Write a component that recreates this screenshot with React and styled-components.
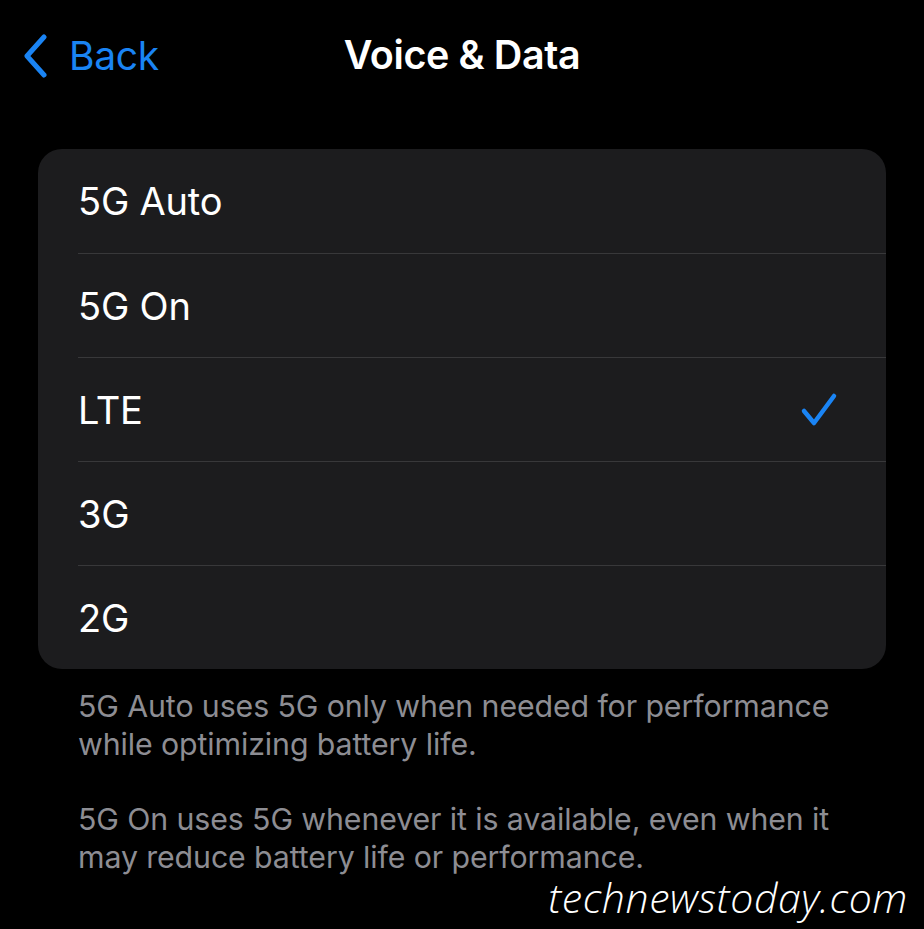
import React, { useState } from "react";
import styled, { createGlobalStyle } from "styled-components";

const GlobalStyle = createGlobalStyle`
    html, body {
        margin: 0;
        padding: 0;
        background: #000000;
    }
    body {
        font-family: Inter, "Noto Sans", "Liberation Sans", sans-serif;
        -webkit-font-smoothing: antialiased;
    }
`;

const options = ["5G Auto", "5G On", "LTE", "3G", "2G"];

function ChevronLeft() {
    return (
        <svg width="26" height="44" viewBox="0 0 26 44" fill="none">
            <path
                d="M22 3 L5 22 L22 41"
                stroke="#1a84f4"
                strokeWidth="5"
                strokeLinecap="round"
                strokeLinejoin="round"
            />
        </svg>
    );
}

function Check() {
    return (
        <svg width="38" height="36" viewBox="0 0 38 36" fill="none">
            <path
                d="M4 19 L14 31 L34 4"
                stroke="#1a84f4"
                strokeWidth="4.5"
                strokeLinecap="round"
                strokeLinejoin="round"
            />
        </svg>
    );
}

function App() {
    const [selected, setSelected] = useState("LTE");
    return (
        <Screen>
            <GlobalStyle />
            <NavBar>
                <BackButton>
                    <ChevronLeft />
                    <span>Back</span>
                </BackButton>
                <Title>Voice &amp; Data</Title>
            </NavBar>

            <Group>
                {options.map((item) => (
                    <Row key={item} onClick={() => setSelected(item)}>
                        <RowInner>
                            <Label>{item}</Label>
                            {selected === item && <Check />}
                        </RowInner>
                    </Row>
                ))}
            </Group>

            <Footer>
                <p>
                    5G Auto uses 5G only when needed for performance
                    <br />
                    while optimizing battery life.
                </p>
                <p>
                    5G On uses 5G whenever it is available, even when it
                    <br />
                    may reduce battery life or performance.
                </p>
            </Footer>

            <Watermark>technewstoday.com</Watermark>
        </Screen>
    );
}

const Screen = styled.div`
    position: relative;
    width: 924px;
    height: 929px;
    background: #000000;
    overflow: hidden;
    display: flex;
    flex-direction: column;
    & > * {
        flex-shrink: 0;
    }
`;

const NavBar = styled.div`
    position: relative;
    height: 110px;
    display: flex;
    align-items: center;
    justify-content: center;
`;

const BackButton = styled.div`
    position: absolute;
    left: 22px;
    top: 32px;
    display: flex;
    align-items: center;
    gap: 21px;
    color: #1a84f4;
    font-size: 39px;
    font-weight: 400;
    letter-spacing: -0.3px;
    cursor: pointer;
`;

const Title = styled.h1`
    margin: 0;
    color: #ffffff;
    font-size: 39.5px;
    font-weight: 600;
    letter-spacing: -0.4px;
`;

const Group = styled.ul`
    list-style: none;
    margin: 39px 38px 0 38px;
    padding: 0;
    background: #1c1c1e;
    border-radius: 24px;
    overflow: hidden;
`;

const Row = styled.li`
    height: 104px;
    padding-left: 40px;
    cursor: pointer;
    & + & > div {
        border-top: 1.5px solid #38383a;
    }
`;

const RowInner = styled.div`
    height: 100%;
    box-sizing: border-box;
    display: flex;
    align-items: center;
    justify-content: space-between;
    padding-right: 48px;
`;

const Label = styled.span`
    color: #ffffff;
    font-size: 38px;
    font-weight: 400;
    letter-spacing: -0.2px;
`;

const Footer = styled.div`
    padding: 18px 60px 0 78px;
    color: #8d8d93;
    font-size: 30.3px;
    line-height: 38px;
    letter-spacing: -0.1px;
    p {
        margin: 0 0 37px 0;
    }
`;

const Watermark = styled.div`
    position: absolute;
    right: 16px;
    bottom: 4px;
    color: #ffffff;
    font-family: "Open Sans", "Noto Sans", sans-serif;
    font-style: italic;
    font-weight: 300;
    font-size: 41px;
    letter-spacing: 0.6px;
`;

export default App;
